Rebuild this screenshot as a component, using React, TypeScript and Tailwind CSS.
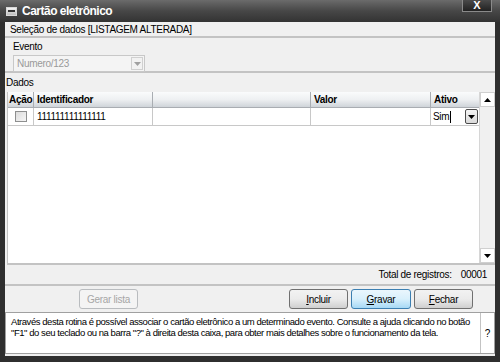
import type React from 'react';

const font = { fontFamily: '"Liberation Sans", Arial, sans-serif' };

const Btn: React.FC<{ label: string; hot?: boolean; disabled?: boolean; width: string }> = ({
	label,
	hot,
	disabled,
	width,
}) => {
	const base = 'flex h-[20px] items-center justify-center rounded-[3px] border text-[10px] tracking-[-0.3px]';
	if (disabled)
		return (
			<div className={`${base} ${width} border-[#b9bcbf] bg-[#f4f4f4] text-[#a6a6a6]`}>{label}</div>
		);
	return (
		<div
			className={`${base} ${width} ${
				hot
					? 'border-[#3c7fb1] bg-gradient-to-b from-[#eaf6fd] via-[#d9f0fc] to-[#a7d9f5]'
					: 'border-[#707070] bg-gradient-to-b from-[#f2f2f2] via-[#ebebeb] to-[#cfcfcf]'
			} text-black`}
		>
			<span className="underline">{label[0]}</span>
			{label.slice(1)}
		</div>
	);
};

const Arrow: React.FC<{ up?: boolean }> = ({ up }) => (
	<svg width="7" height="4" viewBox="0 0 7 4">
		<polygon points={up ? '0,4 7,4 3.5,0' : '0,0 7,0 3.5,4'} fill="#000" />
	</svg>
);

export default function App() {
	const th = 'flex h-full items-center border-r border-[#a9adb2] px-[3px] text-[10px] font-bold tracking-[-0.3px] text-black';
	const txt = 'text-[10px] tracking-[-0.3px] text-black';
	return (
		<div className="flex h-[362px] w-[500px] flex-col bg-[#2f2f2f]" style={font}>
			{/* title bar */}
			<div className="relative flex h-[22px] items-center bg-gradient-to-b from-[#6b6b6b] via-[#474747] to-[#333333] pl-[6px]">
				<div className="flex h-[9px] w-[11px] items-center justify-center border border-[#d8d8d8] bg-gradient-to-b from-[#f4f4f4] to-[#bdbdbd]">
					<div className="h-[2px] w-[7px] bg-[#333]" />
				</div>
				<span className="ml-[5px] text-[12px] font-bold tracking-[-0.5px] text-white">Cartão eletrônico</span>
				<div className="absolute top-0 right-[8px] flex h-[12px] w-[30px] items-center justify-center border border-t-0 border-[#8a8a8a] bg-gradient-to-b from-[#4a4a4a] to-[#222]">
					<span className="text-[11px] leading-none font-bold text-white">X</span>
				</div>
			</div>

			<div className="mx-[5px] flex flex-1 flex-col bg-[#f0f0f0]">
				{/* section header */}
				<div className={`flex h-[16px] items-center border-b-2 border-[#c3c3c3] pl-[5px] ${txt}`}>
					Seleção de dados [LISTAGEM ALTERADA]
				</div>

				{/* evento */}
				<div className="flex h-[35px] flex-col border-b-2 border-[#c3c3c3] pt-[2px] pl-[8px]">
					<span className={`${txt} leading-[14px]`}>Evento</span>
					<div className="mt-[1px] flex h-[17px] w-[132px] items-center border border-[#c8c8c8] bg-[#f4f4f4]">
						<span className="flex-1 pl-[3px] text-[10px] tracking-[-0.3px] text-[#9a9a9a]">Numero/123</span>
						<div className="mr-[1px] flex h-[13px] w-[12px] items-center justify-center border border-[#d0d0d0] bg-[#f2f2f2]">
							<svg width="7" height="4" viewBox="0 0 7 4">
								<polygon points="0,0 7,0 3.5,4" fill="#a0a0a0" />
							</svg>
						</div>
					</div>
				</div>

				{/* dados */}
				<div className={`flex h-[19px] items-center pl-[1px] ${txt}`}>Dados</div>

				<div className="ml-[2px] flex h-[173px] border-b-2 border-l border-[#c3c3c3] bg-white">
					<div className="flex flex-1 flex-col">
						<div className="flex h-[16px] border-b border-[#a9adb2] bg-gradient-to-b from-[#fafbfc] via-[#eef0f2] to-[#cfd4d9]">
							<div className={`${th} w-[26px] !px-[1px]`}>Ação</div>
							<div className={`${th} w-[119px]`}>Identificador</div>
							<div className={`${th} w-[158px]`} />
							<div className={`${th} w-[120px]`}>Valor</div>
							<div className={`${th} flex-1 border-r-0`}>Ativo</div>
						</div>
						<div className="flex h-[18px] border-b border-[#c8c8c8]">
							<div className="flex w-[26px] items-center justify-center border-r border-[#c8c8c8]">
								<div className="h-[11px] w-[12px] border border-[#8e8f8f] bg-gradient-to-br from-[#dcdcdc] to-[#f6f6f6]" />
							</div>
							<div className={`flex w-[119px] items-center border-r border-[#c8c8c8] pl-[3px] ${txt}`}>
								111111111111111
							</div>
							<div className="w-[158px] border-r border-[#c8c8c8]" />
							<div className="w-[120px] border-r border-[#c8c8c8]" />
							<div className="flex flex-1 items-center pl-[2px]">
								<span className={txt}>Sim</span>
								<div className="ml-[1px] h-[12px] w-[1px] bg-black" />
								<div className="ml-auto mr-[1px] flex h-[15px] w-[13px] items-center justify-center rounded-[2px] border border-[#4c4c4c] bg-gradient-to-b from-[#f4f4f4] to-[#dadada]">
									<Arrow />
								</div>
							</div>
						</div>
					</div>
					{/* scrollbar */}
					<div className="flex w-[16px] flex-col justify-between border-l border-[#d6d6d6] bg-[#f0f0f0]">
						<div className="flex h-[15px] items-center justify-center border border-[#d0d0d0] bg-white">
							<Arrow up />
						</div>
						<div className="flex h-[15px] items-center justify-center border border-[#d0d0d0] bg-white">
							<Arrow />
						</div>
					</div>
				</div>

				{/* total */}
				<div className={`flex h-[21px] items-center justify-end border-b-2 border-[#c3c3c3] pr-[8px] ${txt}`}>
					<span>Total de registros:</span>
					<span className="ml-[9px]">00001</span>
				</div>

				{/* buttons */}
				<div className="flex h-[25px] items-center pt-[1px]">
					<div className="ml-[74px]">
						<Btn label="Gerar lista" disabled width="w-[59px]" />
					</div>
					<div className="ml-auto mr-[22px] flex gap-[3px]">
						<Btn label="Incluir" width="w-[59px]" />
						<Btn label="Gravar" hot width="w-[60px]" />
						<Btn label="Fechar" width="w-[59px]" />
					</div>
				</div>

				{/* help */}
				<div className="mt-[1px] flex h-[42px] border border-[#a0a0a0] bg-white">
					<div className="flex-1 pt-[3px] pr-[2px] pl-[5px] text-[9.5px] leading-[11px] tracking-[-0.45px] text-black">
						Através desta rotina é possível associar o cartão eletrônico a um determinado evento. Consulte a ajuda clicando no botão "F1" do seu teclado ou na barra "?" à direita desta caixa, para obter mais detalhes sobre o funcionamento da tela.
					</div>
					<div className="flex w-[14px] items-center justify-center border-l border-[#c3c3c3] text-[10px] text-black">
						?
					</div>
				</div>
			</div>
			<div className="h-[6px]" />
		</div>
	);
}
